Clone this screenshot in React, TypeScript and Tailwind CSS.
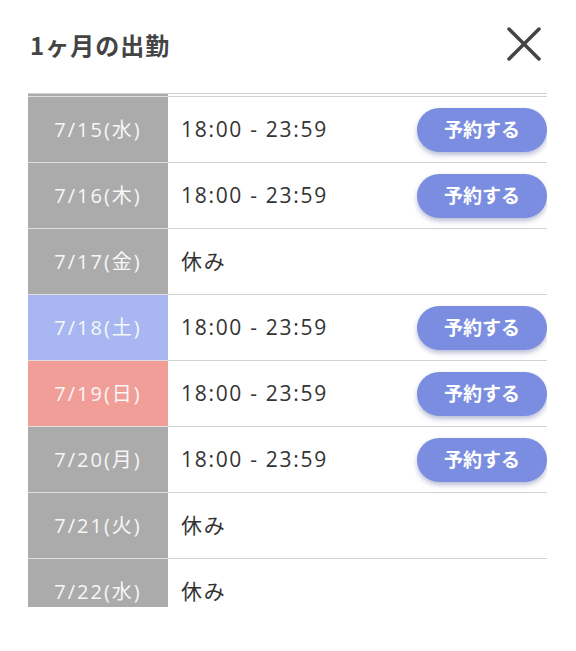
import React from 'react';

type Day = { date: string; kind: 'weekday' | 'sat' | 'sun'; time: string | null };

const days: Day[] = [
  { date: '7/15(水)', kind: 'weekday', time: '18:00 - 23:59' },
  { date: '7/16(木)', kind: 'weekday', time: '18:00 - 23:59' },
  { date: '7/17(金)', kind: 'weekday', time: null },
  { date: '7/18(土)', kind: 'sat', time: '18:00 - 23:59' },
  { date: '7/19(日)', kind: 'sun', time: '18:00 - 23:59' },
  { date: '7/20(月)', kind: 'weekday', time: '18:00 - 23:59' },
  { date: '7/21(火)', kind: 'weekday', time: null },
  { date: '7/22(水)', kind: 'weekday', time: null },
];

const dateBg = {
  weekday: 'bg-[#ababab]',
  sat: 'bg-[#a8b7f2]',
  sun: 'bg-[#f19e98]',
};

const font = { fontFamily: '"Noto Sans CJK JP", "Noto Sans", sans-serif' };
const latin = { fontFamily: '"Open Sans", "Noto Sans CJK JP", sans-serif' };

export default function App() {
  return (
    <div className="w-[576px] h-[651px] bg-white overflow-hidden" style={font}>
      <div className="flex justify-between items-center h-[93px] pl-[30px] pr-[34px] pb-[4px]">
        <h1 className="text-[24px] font-semibold text-[#444] tracking-[1px]">1ヶ月の出勤</h1>
        <svg width="36" height="36" viewBox="0 0 36 36" className="mt-[-2px]">
          <path d="M3 3 L33 33 M33 3 L3 33" stroke="#444" strokeWidth="3.5" strokeLinecap="round" />
        </svg>
      </div>

      <div className="ml-[28px] w-[519px] h-[514px] overflow-hidden border-t border-[#cfcfcf]">
        <div className="flex h-[2px]">
          <div className="w-[140px] bg-[#ababab]" />
        </div>
        {days.map((d) => (
          <div key={d.date} className="flex h-[66px] border-t border-[#d2d2d2]">
            <div
              className={`w-[140px] shrink-0 flex items-center justify-center text-[20px] text-[#f7f7f7] tracking-[2px] border-t border-[#dedede] -mt-px ${dateBg[d.kind]}`}
              style={latin}
            >
              {d.date}
            </div>
            <div className="flex-1 flex items-center justify-between pl-[13px]">
              <span className="text-[21px] text-[#333] tracking-[1.7px]" style={latin}>
                {d.time ?? '休み'}
              </span>
              {d.time && (
                <button className="w-[130px] h-[44px] rounded-full bg-[#7a8de0] text-white text-[19px] font-semibold shadow-[0_3px_5px_rgba(60,70,140,0.35)]">
                  予約する
                </button>
              )}
            </div>
          </div>
        ))}
      </div>
    </div>
  );
}
